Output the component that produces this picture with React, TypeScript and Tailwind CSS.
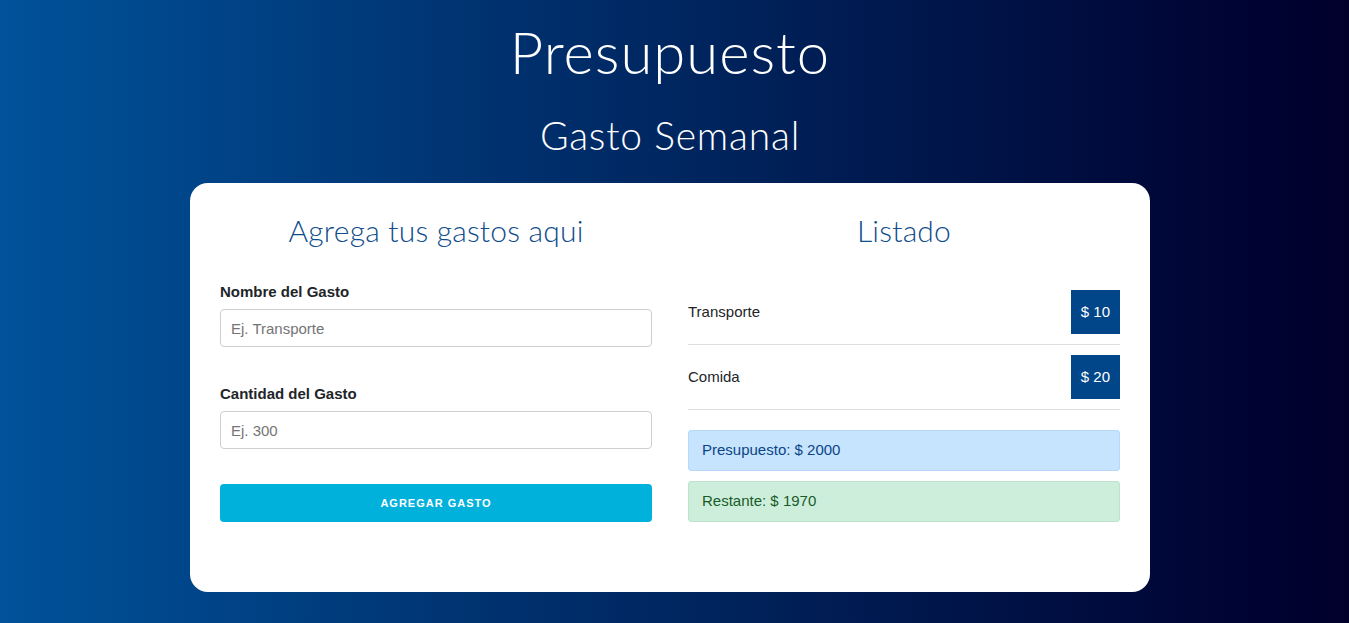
import { FunctionComponent } from "react";

const gastos = [
  { id: 1, nombre: "Transporte", cantidad: 10 },
  { id: 2, nombre: "Comida", cantidad: 20 },
];

const App: FunctionComponent = () => {
  return (
    <div className="min-h-[623px] bg-gradient-to-r from-[#00529a] to-[#00002b] flex flex-col items-center pt-[14px] pb-[31px] pr-[9px] font-['Liberation_Sans',Arial,sans-serif]">
      <h1 className="m-0 text-[58px] leading-[76px] font-light text-white font-['Lato',sans-serif] tracking-[1px]">
        Presupuesto
      </h1>
      <h2 className="mt-[20px] text-[39px] leading-[50px] font-light text-white font-['Lato',sans-serif] tracking-[0.8px]">
        Gasto Semanal
      </h2>
      <div className="mt-[23px] w-[960px] bg-white rounded-[18px] px-[30px] pt-[27px] pb-[70px] grid grid-cols-2 gap-[36px]">
        <div className="flex flex-col">
          <h3 className="text-center text-[30px] leading-[40px] font-light text-[#0e4c8c] font-['Lato',sans-serif] tracking-[0.2px]">
            Agrega tus gastos aqui
          </h3>
          <form className="mt-[33px] flex flex-col">
            <label className="text-[15px] font-bold text-[#212529] leading-[18px]">Nombre del Gasto</label>
            <input
              type="text"
              placeholder="Ej. Transporte"
              className="mt-[8px] h-[38px] w-full px-[10px] rounded-[4px] border border-[#cfcfcf] text-[15px] text-[#495057] placeholder:text-[#757575] outline-none"
            />
            <label className="mt-[38px] text-[15px] font-bold text-[#212529] leading-[18px]">Cantidad del Gasto</label>
            <input
              type="number"
              placeholder="Ej. 300"
              className="mt-[8px] h-[38px] w-full px-[10px] rounded-[4px] border border-[#cfcfcf] text-[15px] text-[#495057] placeholder:text-[#757575] outline-none"
            />
            <button
              type="button"
              className="mt-[35px] h-[38px] w-full rounded-[4px] bg-[#00b1dc] text-white text-[11px] font-bold tracking-[1px] uppercase"
            >
              Agregar Gasto
            </button>
          </form>
        </div>
        <div className="flex flex-col">
          <h3 className="text-center text-[30px] leading-[40px] font-light text-[#0e4c8c] font-['Lato',sans-serif] tracking-[0.2px]">
            Listado
          </h3>
          <ul className="mt-[30px]">
            {gastos.map((g) => (
              <li key={g.id} className="flex items-center justify-between py-[10px] border-b border-[#dedede]">
                <span className="text-[15px] text-[#212529]">{g.nombre}</span>
                <span className="h-[44px] px-[10px] flex items-center bg-[#02468a] text-white text-[15px]">$ {g.cantidad}</span>
              </li>
            ))}
          </ul>
          <div className="mt-[20px] h-[41px] px-[13px] flex items-center rounded-[3px] bg-[#c6e4fd] border border-[#b5d8fb] text-[#0b4486] text-[15px]">
            Presupuesto: $ 2000
          </div>
          <div className="mt-[10px] h-[41px] px-[13px] flex items-center rounded-[3px] bg-[#cdeedb] border border-[#bde3cb] text-[#195c2a] text-[15px]">
            Restante: $ 1970
          </div>
        </div>
      </div>
    </div>
  );
};

export default App;
